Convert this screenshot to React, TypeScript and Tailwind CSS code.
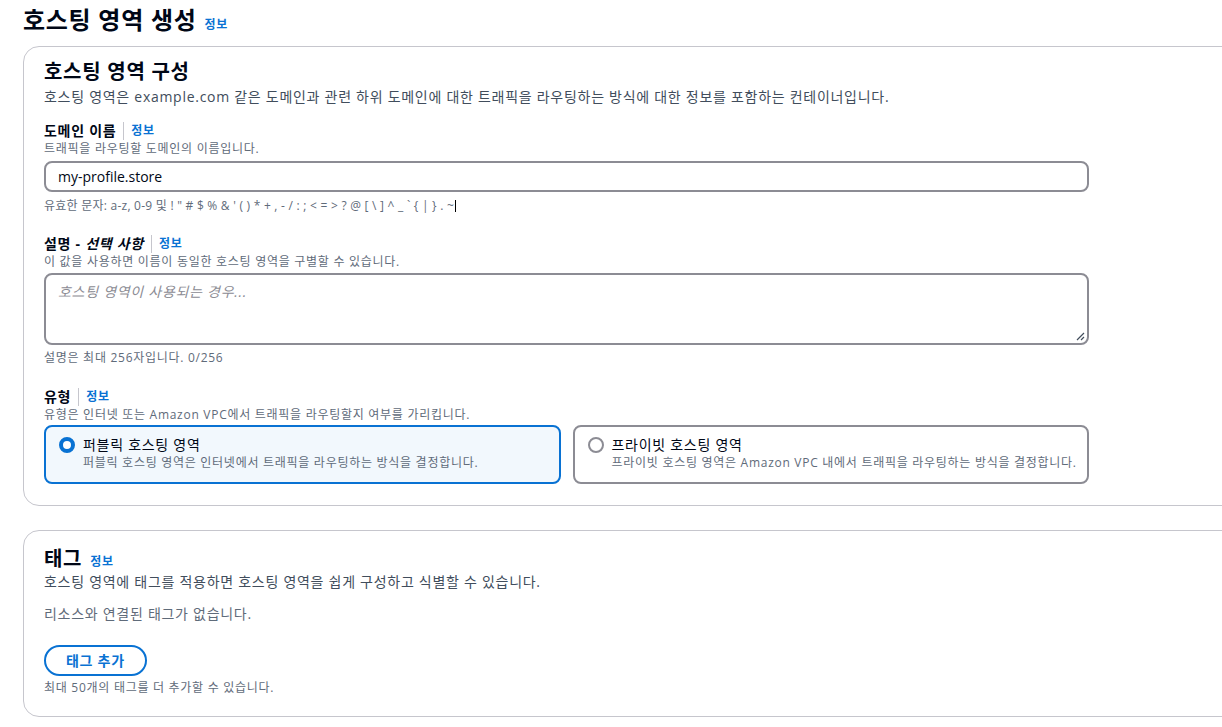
import React from "react";

const font = {
  fontFamily: '"Open Sans", "Noto Sans CJK KR", sans-serif',
};

function InfoLink({ divider = false }: { divider?: boolean }) {
  return (
    <span className="flex items-center">
      {divider && <span className="mx-[7px] h-[18px] w-px bg-[#c6c6cd]" />}
      <a className="text-[12px] font-bold leading-[16px] text-[#0972d3]">정보</a>
    </span>
  );
}

function Radio({ checked }: { checked: boolean }) {
  return checked ? (
    <span className="mt-[2px] flex h-[16px] w-[16px] shrink-0 items-center justify-center rounded-full border-[4px] border-[#0972d3] bg-white" />
  ) : (
    <span className="mt-[2px] h-[16px] w-[16px] shrink-0 rounded-full border-2 border-[#8c8c94] bg-white" />
  );
}

function TypeCard({
  checked,
  title,
  desc,
}: {
  checked: boolean;
  title: string;
  desc: string;
}) {
  return (
    <div
      className={`flex h-[59px] min-w-0 flex-1 gap-[8px] rounded-[8px] border-2 px-[13px] pt-[8px] ${
        checked ? "border-[#0972d3] bg-[#f2f8fd]" : "border-[#8c8c94] bg-white"
      }`}
    >
      <Radio checked={checked} />
      <div className="flex flex-col whitespace-nowrap">
        <span className="text-[14px] leading-[20px] text-[#000716]">{title}</span>
        <span className="text-[12px] leading-[16px] text-[#5f6b7a]">{desc}</span>
      </div>
    </div>
  );
}

export default function App() {
  return (
    <div className="h-[727px] w-[1222px] overflow-hidden bg-white tracking-[0.045em]" style={font}>
      <div className="w-[1260px] pl-[23px]">
        {/* Page header */}
        <div className="flex items-baseline gap-[8px] pt-[3px]">
          <h1 className="text-[24px] font-bold leading-[34px] text-[#000716]">호스팅 영역 생성</h1>
          <InfoLink />
        </div>

        {/* Hosted zone configuration */}
        <section className="mt-[9px] rounded-[16px] border border-[#c6c6cd] bg-white px-[20px] pb-[21px] pt-[12px]">
          <h2 className="text-[20px] font-bold leading-[26px] text-[#000716]">호스팅 영역 구성</h2>
          <p className="mt-[2px] text-[14px] leading-[20px] text-[#414d5c]">
            호스팅 영역은 example.com 같은 도메인과 관련 하위 도메인에 대한 트래픽을 라우팅하는 방식에 대한 정보를 포함하는 컨테이너입니다.
          </p>

          <div className="w-[1045px]">
            {/* Domain name */}
            <div className="mt-[14px] flex items-center">
              <span className="text-[14px] font-bold leading-[20px] text-[#000716]">도메인 이름</span>
              <InfoLink divider />
            </div>
            <p className="text-[12px] leading-[16px] text-[#5f6b7a]">트래픽을 라우팅할 도메인의 이름입니다.</p>
            <div className="mt-[4px] flex h-[31px] items-center rounded-[8px] border-2 border-[#8c8c94] px-[12px] text-[14px] tracking-normal text-[#000716]">
              my-profile.store
            </div>
            <p className="mt-[6px] text-[12px] leading-[16px] tracking-[0.02em] text-[#5f6b7a]">
              유효한 문자: a-z, 0-9 및 ! " # $ % &amp; ' ( ) * + , - / : ; &lt; = &gt; ? @ [ \ ] ^ _ ` {"{"} | {"}"} . ~
              <span className="ml-[1px] inline-block h-[12px] w-px translate-y-[2px] bg-black" />
            </p>

            {/* Description */}
            <div className="mt-[20px] flex items-center">
              <span className="text-[14px] font-bold leading-[20px] text-[#000716]">
                설명 - <i>선택 사항</i>
              </span>
              <InfoLink divider />
            </div>
            <p className="text-[12px] leading-[16px] text-[#5f6b7a]">
              이 값을 사용하면 이름이 동일한 호스팅 영역을 구별할 수 있습니다.
            </p>
            <div className="relative mt-[3px] h-[72px] rounded-[8px] border-2 border-[#8c8c94] px-[12px] pt-[4px]">
              <span className="text-[14px] italic leading-[20px] text-[#8c8c94]">호스팅 영역이 사용되는 경우...</span>
              <svg className="absolute bottom-[2px] right-[2px]" width="10" height="10" viewBox="0 0 10 10">
                <path d="M9 2 L2 9 M9 6 L6 9" stroke="#414d5c" strokeWidth="1.2" />
              </svg>
            </div>
            <p className="mt-[5px] text-[12px] leading-[16px] text-[#5f6b7a]">설명은 최대 256자입니다. 0/256</p>

            {/* Type */}
            <div className="mt-[21px] flex items-center">
              <span className="text-[14px] font-bold leading-[20px] text-[#000716]">유형</span>
              <InfoLink divider />
            </div>
            <p className="text-[12px] leading-[16px] text-[#5f6b7a]">
              유형은 인터넷 또는 Amazon VPC에서 트래픽을 라우팅할지 여부를 가리킵니다.
            </p>
            <div className="mt-[2px] flex gap-[12px]">
              <TypeCard
                checked
                title="퍼블릭 호스팅 영역"
                desc="퍼블릭 호스팅 영역은 인터넷에서 트래픽을 라우팅하는 방식을 결정합니다."
              />
              <TypeCard
                checked={false}
                title="프라이빗 호스팅 영역"
                desc="프라이빗 호스팅 영역은 Amazon VPC 내에서 트래픽을 라우팅하는 방식을 결정합니다."
              />
            </div>
          </div>
        </section>

        {/* Tags */}
        <section className="mt-[24px] rounded-[16px] border border-[#c6c6cd] bg-white px-[20px] pb-[20px] pt-[15px]">
          <div className="flex items-baseline gap-[8px]">
            <h2 className="text-[20px] font-bold leading-[26px] text-[#000716]">태그</h2>
            <InfoLink />
          </div>
          <p className="mt-[0px] text-[14px] leading-[20px] text-[#414d5c]">
            호스팅 영역에 태그를 적용하면 호스팅 영역을 쉽게 구성하고 식별할 수 있습니다.
          </p>
          <p className="mt-[12px] text-[14px] leading-[20px] text-[#5f6b7a]">리소스와 연결된 태그가 없습니다.</p>
          <button className="mt-[21px] h-[31px] rounded-full border-2 border-[#0972d3] px-[20px] text-[14px] font-bold leading-[20px] text-[#0972d3]">
            태그 추가
          </button>
          <p className="mt-[4px] text-[12px] leading-[16px] text-[#5f6b7a]">최대 50개의 태그를 더 추가할 수 있습니다.</p>
        </section>
      </div>
    </div>
  );
}
